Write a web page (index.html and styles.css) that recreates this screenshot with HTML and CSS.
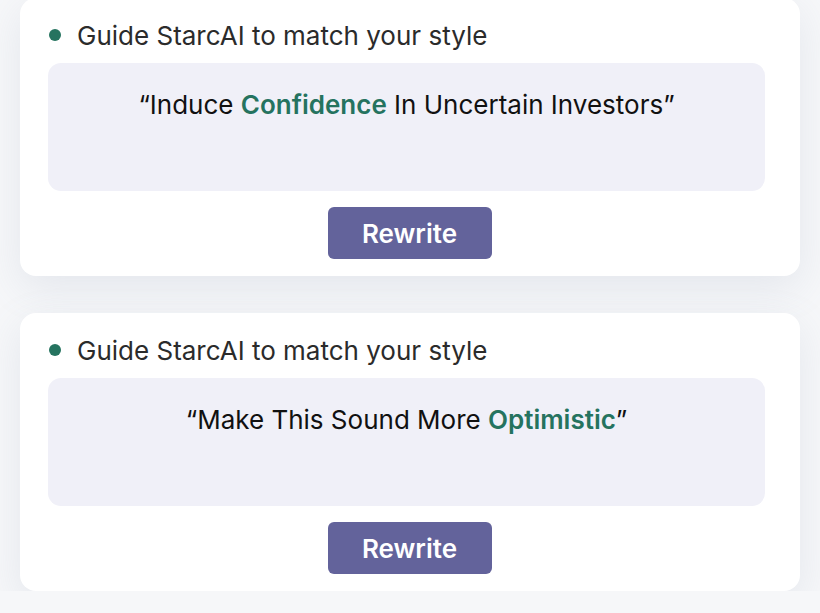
FILE: index.html
```html
<!DOCTYPE html>
<html>
<head>
<meta charset="utf-8">
<link rel="stylesheet" href="styles.css">
</head>
<body>
<div class="list">
  <section class="card">
    <div class="head"><span class="dot"></span><span class="label">Guide StarcAI to match your style</span></div>
    <div class="prompt"><p>“Induce <b>Confidence</b> In Uncertain Investors”</p></div>
    <div class="actions"><button class="btn">Rewrite</button></div>
  </section>
  <section class="card">
    <div class="head"><span class="dot"></span><span class="label">Guide StarcAI to match your style</span></div>
    <div class="prompt"><p>“Make This Sound More <b>Optimistic</b>”</p></div>
    <div class="actions"><button class="btn">Rewrite</button></div>
  </section>
</div>
</body>
</html>
```

FILE: styles.css
```css
html, body {
  margin: 0;
  padding: 0;
  background: #f6f7f9;
  font-family: Inter, "Noto Sans", sans-serif;
  overflow: hidden;
}
.list {
  display: flex;
  flex-direction: column;
  gap: 37px;
  padding: 0 20px;
  margin-top: -2px;
}
.card {
  background: #ffffff;
  border-radius: 16px;
  box-shadow: 0 12px 40px rgba(120, 135, 160, 0.14);
  height: 278px;
  box-sizing: border-box;
  padding: 23px 35px 0 28px;
  display: flex;
  flex-direction: column;
}
.head {
  display: flex;
  align-items: center;
  height: 28px;
  gap: 16px;
  padding-left: 0;
}
.dot {
  width: 12px;
  height: 12px;
  border-radius: 50%;
  background: #25735f;
  flex: none;
  margin-left: 1px;
}
.label {
  font-size: 26px;
  color: #2b2b2b;
  letter-spacing: 0;
}
.prompt {
  margin-top: 14px;
  height: 128px;
  background: #f0f0f8;
  border-radius: 13px;
  text-align: center;
}
.prompt p {
  margin: 0;
  padding-top: 26px;
  font-size: 26px;
  line-height: 32px;
  color: #111111;
}
.prompt b {
  font-weight: 600;
  color: #25735f;
}
.actions {
  display: flex;
  justify-content: center;
  margin-top: 16px;
}
.btn {
  width: 164px;
  height: 52px;
  border: none;
  border-radius: 6px;
  background: #63639b;
  color: #ffffff;
  font-family: Inter, "Noto Sans", sans-serif;
  font-size: 26px;
  font-weight: 600;
  padding: 0;
  margin-left: 6px;
}
```
